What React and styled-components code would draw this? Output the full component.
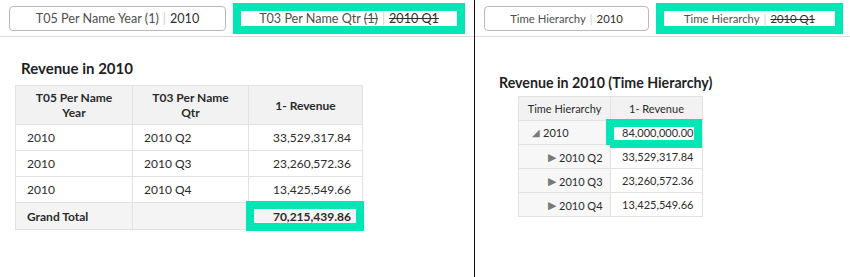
import React from "react"
import styled, { createGlobalStyle, css } from "styled-components"

const GlobalStyle = createGlobalStyle`
  html, body {
    margin: 0;
    padding: 0;
    background: #fff;
  }
  body {
    font-family: Lato, "Open Sans", sans-serif;
    color: #2b2b2b;
  }
`

const highlight = css`
  &::after {
    content: "";
    position: absolute;
    inset: ${(p) => p.$inset || "-3px"};
    border: 8px solid #00e6b4;
    pointer-events: none;
  }
`

export default function App() {
  return (
    <>
      <GlobalStyle />
      <Page>
        <Panel $left>
          <FilterBar>
            <Pill $w="217px" $fs="12.6px">
              T05 Per Name Year (1)
              <Sep>|</Sep>
              <Value>2010</Value>
            </Pill>
            <Pill $w="226px" $fs="12.6px" $hl $inset="-4px">
              T03 Per Name Qtr <Struck>(1)</Struck>
              <Sep>|</Sep>
              <Value $struck>2010 Q1</Value>
            </Pill>
          </FilterBar>
          <Body $pad="21px 0 0 15px">
            <Title $indent="6px">Revenue in 2010</Title>
            <Table $mt="7px" $w="347px" $fs="12px" $row="25px">
              <colgroup>
                <col width="117" />
                <col width="116" />
                <col width="114" />
              </colgroup>
              <thead>
                <tr>
                  <Th $bold $h="38px">T05 Per Name<br />Year</Th>
                  <Th $bold $h="38px">T03 Per Name<br />Qtr</Th>
                  <Th $bold $h="38px">1- Revenue</Th>
                </tr>
              </thead>
              <tbody>
                {[
                  ["2010", "2010 Q2", "33,529,317.84"],
                  ["2010", "2010 Q3", "23,260,572.36"],
                  ["2010", "2010 Q4", "13,425,549.66"],
                ].map((r) => (
                  <tr key={r[1]}>
                    <Td>{r[0]}</Td>
                    <Td>{r[1]}</Td>
                    <Td $num>{r[2]}</Td>
                  </tr>
                ))}
                <TotalRow>
                  <Td $bold>Grand Total</Td>
                  <Td />
                  <Td $num $bold $hl $inset="-2px -2px -2px -3px">70,215,439.86</Td>
                </TotalRow>
              </tbody>
            </Table>
          </Body>
        </Panel>
        <Panel>
          <FilterBar>
            <Pill $w="165px" $fs="11.3px">
              Time Hierarchy
              <Sep>|</Sep>
              <Value>2010</Value>
            </Pill>
            <Pill $w="181px" $fs="11.3px" $hl $inset="-4px">
              Time Hierarchy
              <Sep>|</Sep>
              <Value $struck>2010 Q1</Value>
            </Pill>
          </FilterBar>
          <Body $pad="35px 0 0 24px">
            <Title $fs="14.2px">Revenue in 2010 (Time Hierarchy)</Title>
            <Table $mt="4px" $ml="19px" $w="184px" $fs="11px" $row="23px">
              <colgroup>
                <col width="92" />
                <col width="92" />
              </colgroup>
              <thead>
                <tr>
                  <Th $h="23px">Time Hierarchy</Th>
                  <Th $h="23px">1- Revenue</Th>
                </tr>
              </thead>
              <tbody>
                <tr>
                  <Td $tree $level={0}>
                    <Caret $open>◢</Caret>2010
                  </Td>
                  <Td $num $hl $inset="-2px 0 -4px -5px">84,000,000.00</Td>
                </tr>
                {[
                  ["2010 Q2", "33,529,317.84"],
                  ["2010 Q3", "23,260,572.36"],
                  ["2010 Q4", "13,425,549.66"],
                ].map((r) => (
                  <tr key={r[0]}>
                    <Td $tree $level={1}>
                      <Caret>▶</Caret>{r[0]}
                    </Td>
                    <Td $num>{r[1]}</Td>
                  </tr>
                ))}
              </tbody>
            </Table>
          </Body>
        </Panel>
      </Page>
    </>
  )
}

const Page = styled.div`
  display: flex;
  width: 850px;
  height: 277px;
  overflow: hidden;
`

const Panel = styled.div`
  display: flex;
  flex-direction: column;
  width: ${(p) => (p.$left ? "474px" : "auto")};
  flex: ${(p) => (p.$left ? "none" : "1")};
  border-right: ${(p) => (p.$left ? "1px solid #111" : "none")};
`

const FilterBar = styled.div`
  display: flex;
  align-items: center;
  gap: 10px;
  height: 37px;
  padding-left: 9px;
  border-bottom: 1px solid #dcdcdc;
  box-sizing: border-box;
  margin-bottom: 1px;
`

const Pill = styled.div`
  position: relative;
  display: inline-flex;
  align-items: center;
  justify-content: center;
  width: ${(p) => p.$w};
  height: 25px;
  box-sizing: border-box;
  border: 1px solid #b9b9b9;
  border-radius: 4px;
  background: #fff;
  font-size: ${(p) => p.$fs};
  color: #4f4f4f;
  white-space: pre;
  ${(p) => p.$hl && highlight}
`

const Sep = styled.span`
  color: #d0d0d0;
  margin: 0 4px;
`

const Value = styled.span`
  color: #2f2f2f;
  text-decoration: ${(p) => (p.$struck ? "line-through" : "none")};
`

const Struck = styled.span`
  text-decoration: line-through;
`

const Body = styled.div`
  padding: ${(p) => p.$pad};
`

const Title = styled.div`
  font-size: ${(p) => p.$fs || "15px"};
  font-weight: 700;
  color: #1f1f1f;
  line-height: 19px;
  margin-left: ${(p) => p.$indent || "0"};
`

const Table = styled.table`
  border-collapse: collapse;
  table-layout: fixed;
  width: ${(p) => p.$w};
  margin-top: ${(p) => p.$mt};
  margin-left: ${(p) => p.$ml || "0"};
  font-size: ${(p) => p.$fs};
  color: #2b2b2b;
  border: 1px solid #dedede;

  td {
    height: ${(p) => p.$row};
  }
`

const Th = styled.th`
  background: #f2f2f2;
  border: 1px solid #e2e2e2;
  font-weight: ${(p) => (p.$bold ? 700 : 400)};
  text-align: center;
  line-height: 15px;
  height: ${(p) => p.$h};
  padding: 0 4px;
  color: #2b2b2b;
  white-space: nowrap;
`

const Td = styled.td`
  position: relative;
  border: 1px solid #e2e2e2;
  padding: ${(p) => (p.$tree ? `0 0 0 ${13 + p.$level * 16}px` : "0 11px")};
  text-align: ${(p) => (p.$num ? "right" : "left")};
  font-weight: ${(p) => (p.$bold ? 700 : 400)};
  white-space: nowrap;
  background: ${(p) => (p.$tree ? "#f7f7f7" : "transparent")};
  ${(p) => p.$hl && highlight}
`

const TotalRow = styled.tr`
  background: #f4f4f4;
  && td {
    height: 26px;
  }
`

const Caret = styled.span`
  display: inline-block;
  color: #7a7a7a;
  font-size: ${(p) => (p.$open ? "10px" : "11px")};
  margin-right: 3px;
  vertical-align: 1px;
`
